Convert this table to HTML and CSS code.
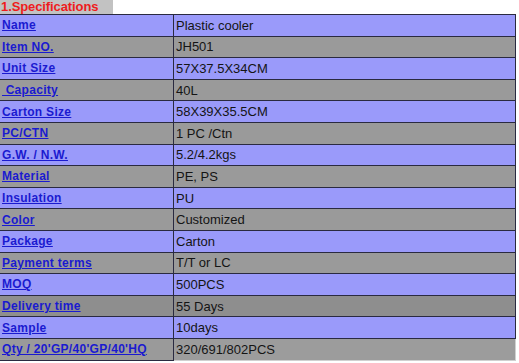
FILE: index.html
```html
<!DOCTYPE html>
<html>
<head>
<meta charset="utf-8">
<link rel="stylesheet" href="styles.css">
</head>
<body>
<div class="title">1.Specifications</div>
<table class="spec">
<tr class="p"><td class="k"><a href="#">Name</a></td><td class="v">Plastic cooler</td></tr>
<tr class="g"><td class="k"><a href="#">Item NO.</a></td><td class="v">JH501</td></tr>
<tr class="p"><td class="k"><a href="#">Unit Size </a></td><td class="v">57X37.5X34CM</td></tr>
<tr class="g"><td class="k"><a href="#">&nbsp;Capacity</a></td><td class="v">40L</td></tr>
<tr class="p"><td class="k"><a href="#">Carton Size</a></td><td class="v">58X39X35.5CM</td></tr>
<tr class="g"><td class="k"><a href="#">PC/CTN</a></td><td class="v">1 PC /Ctn</td></tr>
<tr class="p"><td class="k"><a href="#">G.W. / N.W.</a></td><td class="v">5.2/4.2kgs</td></tr>
<tr class="g"><td class="k"><a href="#">Material</a></td><td class="v">PE, PS</td></tr>
<tr class="p"><td class="k"><a href="#">Insulation</a></td><td class="v">PU</td></tr>
<tr class="g"><td class="k"><a href="#">Color</a></td><td class="v">Customized</td></tr>
<tr class="p"><td class="k"><a href="#">Package</a></td><td class="v">Carton</td></tr>
<tr class="g"><td class="k"><a href="#">Payment terms</a></td><td class="v">T/T or LC</td></tr>
<tr class="p"><td class="k"><a href="#">MOQ</a></td><td class="v">500PCS</td></tr>
<tr class="g dark"><td class="k"><a href="#">Delivery time</a></td><td class="v">55 Days</td></tr>
<tr class="p"><td class="k"><a href="#">Sample</a></td><td class="v">10days</td></tr>
<tr class="g last"><td class="k"><a href="#">Qty / 20'GP/40'GP/40'HQ</a></td><td class="v">320/691/802PCS</td></tr>
</table>
</body>
</html>
```
FILE: styles.css
```css
html, body {
  margin: 0;
  padding: 0;
  background: #ffffff;
}
body {
  font-family: "Liberation Sans", Arial, sans-serif;
}
.title {
  width: 113px;
  height: 14px;
  background: #c2c2c2;
  color: #ee1c1c;
  font-weight: bold;
  font-size: 13px;
  letter-spacing: -0.1px;
  line-height: 14px;
  padding-left: 1px;
  box-sizing: border-box;
  white-space: nowrap;
}
.spec {
  border-collapse: collapse;
  width: 516px;
  table-layout: fixed;
}
.spec td {
  height: 20.6px;
  padding: 0 0 0 2px;
  border: 1px solid #2a2a40;
  vertical-align: middle;
  white-space: nowrap;
  overflow: hidden;
}
.spec td.k {
  width: 171px;
  border-left: none;
  font-size: 12px;
  font-weight: bold;
  letter-spacing: 0.3px;
}
.spec td.k a {
  color: #1a1ad0;
  text-decoration: underline;
}
.spec td.v {
  font-size: 13px;
  color: #141414;
}
.spec tr.p td {
  background: #9a9afa;
}
.spec tr.g td {
  background: #9a9a9a;
}
.spec tr.dark td {
  background: #8e8e8e;
}
.spec tr.last td.v {
  border: 1px solid #d0d0d0;
  background: #9c9c9c;
}
```
